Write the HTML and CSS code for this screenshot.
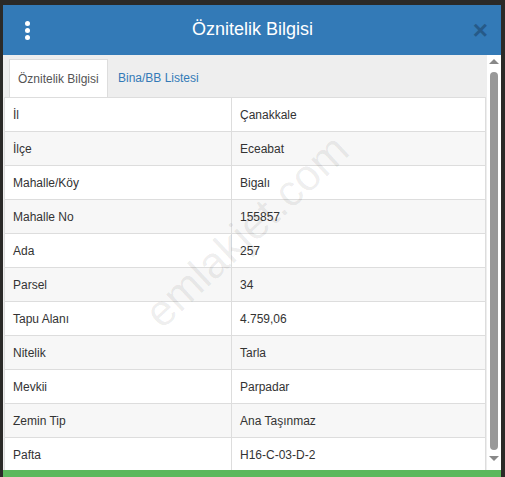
FILE: index.html
```html
<!DOCTYPE html>
<html lang="tr">
<head>
    <meta charset="UTF-8">
    <meta name="viewport" content="width=device-width, initial-scale=1.0">
    <title>Öznitelik Bilgisi</title>
    <link rel="stylesheet" href="styles.css">
</head>
<body>
    <div class="modal">
        <div class="modal-header">
            <span class="kebab"><i></i><i></i><i></i></span>
            <h4 class="modal-title">Öznitelik Bilgisi</h4>
            <span class="close">&times;</span>
        </div>
        <div class="modal-body">
            <div class="content">
                <ul class="tabs">
                    <li class="active">Öznitelik Bilgisi</li>
                    <li>Bina/BB Listesi</li>
                </ul>
                <table class="info-table">
                    <tr><td>İl</td><td>Çanakkale</td></tr>
                    <tr><td>İlçe</td><td>Eceabat</td></tr>
                    <tr><td>Mahalle/Köy</td><td>Bigalı</td></tr>
                    <tr><td>Mahalle No</td><td>155857</td></tr>
                    <tr><td>Ada</td><td>257</td></tr>
                    <tr><td>Parsel</td><td>34</td></tr>
                    <tr><td>Tapu Alanı</td><td>4.759,06</td></tr>
                    <tr><td>Nitelik</td><td>Tarla</td></tr>
                    <tr><td>Mevkii</td><td>Parpadar</td></tr>
                    <tr><td>Zemin Tip</td><td>Ana Taşınmaz</td></tr>
                    <tr><td>Pafta</td><td>H16-C-03-D-2</td></tr>
                </table>
            </div>
            <div class="scrollbar">
                <span class="arrow up"></span>
                <span class="thumb"></span>
                <span class="arrow down"></span>
            </div>
            <div class="watermark">emlakjet.com</div>
        </div>
        <div class="modal-footer"></div>
    </div>
</body>
</html>
```

FILE: styles.css
```css
body {
    margin: 0;
    font-family: "Liberation Sans", Arial, sans-serif;
    background-color: #2b2a28;
    height: 477px;
    overflow: hidden;
}

.modal {
    width: 498px;
    margin: 5px 0 0 3px;
    background-color: #fff;
}

.modal-header {
    height: 50px;
    background-color: #337ab7;
    display: flex;
    align-items: center;
    padding: 0 13px 0 19px;
}

.kebab {
    width: 10px;
    display: flex;
    flex-direction: column;
    align-items: center;
    gap: 2px;
}

.kebab i {
    width: 5px;
    height: 5px;
    border-radius: 50%;
    background-color: #fff;
}

.modal-title {
    flex: 1;
    margin: 0 0 2px;
    text-align: center;
    color: #fff;
    font-size: 18px;
    font-weight: normal;
}

.close {
    color: #23537e;
    font-size: 26px;
    font-weight: bold;
    line-height: 1;
    opacity: 0.8;
}

.modal-body {
    position: relative;
    display: flex;
    height: 415px;
    overflow: hidden;
    background-color: #fff;
}

.content {
    flex: 1;
    background-color: #eee;
    padding-left: 1px;
}

.tabs {
    list-style: none;
    margin: 0;
    padding: 4px 0 0 5px;
    display: flex;
    font-size: 12px;
}

.tabs li {
    height: 38px;
    line-height: 38px;
    padding: 0 10px;
    color: #337ab7;
    white-space: nowrap;
    box-sizing: border-box;
}

.tabs li.active {
    background-color: #fff;
    color: #555;
    border: 1px solid #ddd;
    border-bottom: none;
    width: 99px;
    padding: 0 8px;
}

.info-table {
    width: 482px;
    border-collapse: collapse;
    background-color: #fff;
    font-size: 12px;
    color: #333;
}

.info-table td {
    border: 1px solid #ddd;
    height: 34px;
    padding: 0 8px;
    box-sizing: border-box;
}

.info-table td:first-child {
    width: 227px;
}

.info-table tr:nth-child(even) td {
    background-color: #f7f7f7;
}

.scrollbar {
    width: 15px;
    background-color: #fff;
    display: flex;
    flex-direction: column;
    align-items: center;
    padding-top: 4px;
    border-left: 1px solid #eee;
}

.arrow {
    width: 0;
    height: 0;
    border-left: 5px solid transparent;
    border-right: 5px solid transparent;
}

.arrow.up {
    border-bottom: 5px solid #888;
}

.arrow.down {
    border-top: 5px solid #888;
    margin-top: 6px;
}

.thumb {
    width: 8px;
    height: 378px;
    margin-top: 8px;
    background-color: #999;
    border-radius: 4px;
}

.watermark {
    position: absolute;
    left: 93px;
    top: 84px;
    width: 260px;
    padding-top: 60px;
    font-size: 44px;
    line-height: 80px;
    text-align: center;
    color: rgba(0, 0, 0, 0.07);
    transform: rotate(-43deg);
    pointer-events: none;
}

.modal-footer {
    height: 7px;
    background-color: #5cb85c;
}
```
